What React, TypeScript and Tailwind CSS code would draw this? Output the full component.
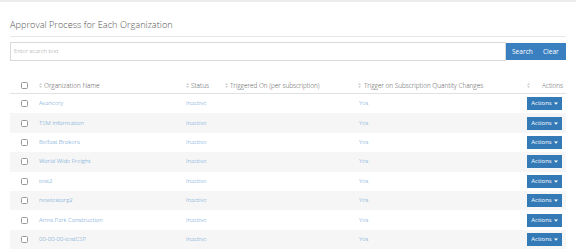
import React from "react";

const rows = [
  "Avancery",
  "TSM Information",
  "Belfast Brokers",
  "World Wide Freight",
  "test2",
  "newtestorg2",
  "Arms Park Construction",
  "00-00-00-testCSP",
];

function SortIcon() {
  return (
    <svg width="3" height="5" viewBox="0 0 3 5" className="shrink-0">
      <path d="M1.5 0 L3 2 L0 2 Z" fill="#cfcfcf" />
      <path d="M1.5 5 L3 3 L0 3 Z" fill="#cfcfcf" />
    </svg>
  );
}

function Checkbox() {
  return <div className="w-[7px] h-[7px] border border-[#999] rounded-[1.5px] bg-white" />;
}

function Caret() {
  return (
    <svg width="4" height="3" viewBox="0 0 4 3" className="ml-[2px]">
      <path d="M0 0.5 L4 0.5 L2 2.7 Z" fill="#ffffff" />
    </svg>
  );
}

export default function App() {
  return (
    <div
      className="w-[576px] h-[249px] overflow-hidden bg-white"
      style={{ fontFamily: '"Open Sans", "Liberation Sans", sans-serif' }}
    >
      <div className="h-[2px] bg-[#ececec]" />
      <div className="px-[10px]">
        <div className="mt-[17px] h-[12px] leading-[12px] text-[9.2px] text-[#555] font-light">
          Approval Process for Each Organization
        </div>
        <div className="mt-[5px] h-[1px] bg-[#e6e6e6]" />
        <div className="mt-[5px] flex h-[19px]">
          <div className="flex-1 border border-[#d9d9d9] flex items-center pl-[3px] text-[5.8px] text-[#999] font-light">
            Enter search text
          </div>
          <div className="w-[60px] flex items-center bg-[#3a7fc0] text-white text-[6.6px] my-[1px]">
            <span className="ml-[6px]">Search</span>
            <span className="ml-[10px]">Clear</span>
          </div>
        </div>

        <div className="mt-[18px] flex h-[15px] items-center border-b border-[#e2e2e2] text-[6.4px] text-[#555] font-[350]">
          <div className="w-[29px] pl-[11px] flex items-center -mt-[2px]">
            <Checkbox />
          </div>
          <div className="w-[147px] flex items-center gap-[1px]">
            <SortIcon />
            <span className="ml-[1px]">Organization Name</span>
          </div>
          <div className="w-[39px] flex items-center gap-[1px]">
            <SortIcon />
            <span className="ml-[1px]">Status</span>
          </div>
          <div className="w-[133px] flex items-center gap-[1px]">
            <SortIcon />
            <span className="ml-[1px]">Triggered On (per subscription)</span>
          </div>
          <div className="w-[169px] flex items-center gap-[1px]">
            <SortIcon />
            <span className="ml-[2px]">Trigger on Subscription Quantity Changes</span>
          </div>
          <div className="w-[39px] flex items-center justify-between pr-[3px]">
            <SortIcon />
            <span>Actions</span>
          </div>
        </div>

        {rows.map((name, i) => (
          <div
            key={name}
            className={
              "flex h-[19.4px] items-center text-[6px] text-[#5896d2] font-[350] " +
              (i % 2 === 1 ? "bg-[#f6f6f6]" : "bg-white")
            }
          >
            <div className="w-[29px] pl-[11px] flex items-center">
              <Checkbox />
            </div>
            <div className="w-[147px]">{name}</div>
            <div className="w-[39px]">Inactive</div>
            <div className="w-[133px]" />
            <div className="w-[169px] pl-[1px]">Yes</div>
            <div className="w-[39px]">
              <div className="w-[35px] h-[13px] bg-[#337ab7] text-white flex items-center justify-center text-[6px] font-normal">
                Actions
                <Caret />
              </div>
            </div>
          </div>
        ))}
      </div>
    </div>
  );
}
